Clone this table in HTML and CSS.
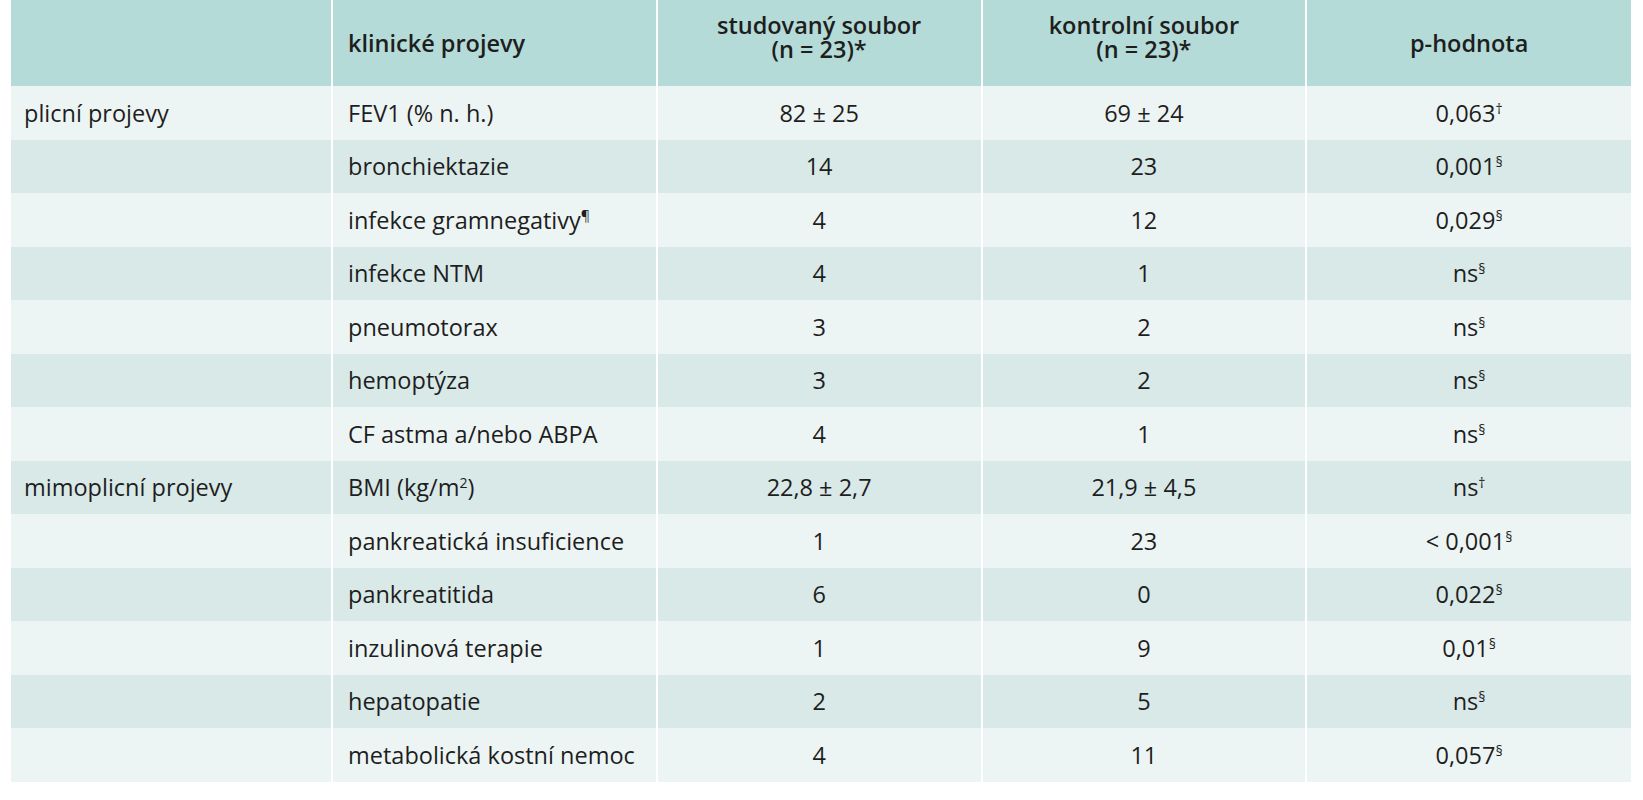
FILE: index.html
```html
<!DOCTYPE html>
<html lang="cs">
<head>
<meta charset="utf-8">
<title>Klinické projevy</title>
<link rel="stylesheet" href="styles.css">
</head>
<body>
<table class="data">
  <colgroup>
    <col class="col-group">
    <col class="col-label">
    <col class="col-num">
    <col class="col-num">
    <col class="col-num">
  </colgroup>
  <thead>
    <tr class="head">
      <th class="c-group"></th>
      <th class="c-label">klinické projevy</th>
      <th class="c-num two-line">studovaný soubor<br>(n = 23)*</th>
      <th class="c-num two-line">kontrolní soubor<br>(n = 23)*</th>
      <th class="c-num">p-hodnota</th>
    </tr>
  </thead>
  <tbody>
    <tr class="odd"><td class="c-group">plicní projevy</td><td class="c-label">FEV1 (% n. h.)</td><td class="c-num">82 ± 25</td><td class="c-num">69 ± 24</td><td class="c-num">0,063<sup>†</sup></td></tr>
    <tr class="even"><td class="c-group"></td><td class="c-label">bronchiektazie</td><td class="c-num">14</td><td class="c-num">23</td><td class="c-num">0,001<sup>§</sup></td></tr>
    <tr class="odd"><td class="c-group"></td><td class="c-label">infekce gramnegativy<sup>¶</sup></td><td class="c-num">4</td><td class="c-num">12</td><td class="c-num">0,029<sup>§</sup></td></tr>
    <tr class="even"><td class="c-group"></td><td class="c-label">infekce NTM</td><td class="c-num">4</td><td class="c-num">1</td><td class="c-num">ns<sup>§</sup></td></tr>
    <tr class="odd"><td class="c-group"></td><td class="c-label">pneumotorax</td><td class="c-num">3</td><td class="c-num">2</td><td class="c-num">ns<sup>§</sup></td></tr>
    <tr class="even"><td class="c-group"></td><td class="c-label">hemoptýza</td><td class="c-num">3</td><td class="c-num">2</td><td class="c-num">ns<sup>§</sup></td></tr>
    <tr class="odd"><td class="c-group"></td><td class="c-label">CF astma a/nebo ABPA</td><td class="c-num">4</td><td class="c-num">1</td><td class="c-num">ns<sup>§</sup></td></tr>
    <tr class="even"><td class="c-group">mimoplicní projevy</td><td class="c-label">BMI (kg/m<sup>2</sup>)</td><td class="c-num">22,8 ± 2,7</td><td class="c-num">21,9 ± 4,5</td><td class="c-num">ns<sup>†</sup></td></tr>
    <tr class="odd"><td class="c-group"></td><td class="c-label">pankreatická insuficience</td><td class="c-num">1</td><td class="c-num">23</td><td class="c-num">&lt; 0,001<sup>§</sup></td></tr>
    <tr class="even"><td class="c-group"></td><td class="c-label">pankreatitida</td><td class="c-num">6</td><td class="c-num">0</td><td class="c-num">0,022<sup>§</sup></td></tr>
    <tr class="odd"><td class="c-group"></td><td class="c-label">inzulinová terapie</td><td class="c-num">1</td><td class="c-num">9</td><td class="c-num">0,01<sup>§</sup></td></tr>
    <tr class="even"><td class="c-group"></td><td class="c-label">hepatopatie</td><td class="c-num">2</td><td class="c-num">5</td><td class="c-num">ns<sup>§</sup></td></tr>
    <tr class="odd"><td class="c-group"></td><td class="c-label">metabolická kostní nemoc</td><td class="c-num">4</td><td class="c-num">11</td><td class="c-num">0,057<sup>§</sup></td></tr>
  </tbody>
</table>
</body>
</html>
```

FILE: styles.css
```css
html, body {
  margin: 0;
  padding: 0;
  background: #ffffff;
}

body {
  font-family: "Open Sans", "Noto Sans", "Liberation Sans", sans-serif;
  color: #1e1e1e;
}

.data {
  margin-left: 11px;
  width: 1620px;
  border-collapse: collapse;
  table-layout: fixed;
  font-size: 23.5px;
}

.col-group {
  width: 321px;
}

.data th,
.data td {
  border-left: 2px solid #ffffff;
  padding: 0 15px;
  vertical-align: middle;
  line-height: 26px;
}

.data th:first-child,
.data td:first-child {
  border-left: none;
  padding-left: 13px;
}

.head {
  height: 86px;
  background: #b4dbd7;
}

.head th {
  font-weight: 600;
  text-align: center;
  vertical-align: middle;
  line-height: 24px;
  padding-top: 0;
  padding-bottom: 0;
}

.head th.two-line {
  padding-bottom: 12px;
}

.head th.c-label {
  text-align: left;
}

.odd {
  height: 53.5px;
  background: #edf5f4;
}

.even {
  height: 53.5px;
  background: #d8e9e8;
}

.c-group,
.c-label {
  text-align: left;
}

.c-num {
  text-align: center;
}

sup {
  font-size: 60%;
  line-height: 0;
  vertical-align: 0.6em;
}
```
